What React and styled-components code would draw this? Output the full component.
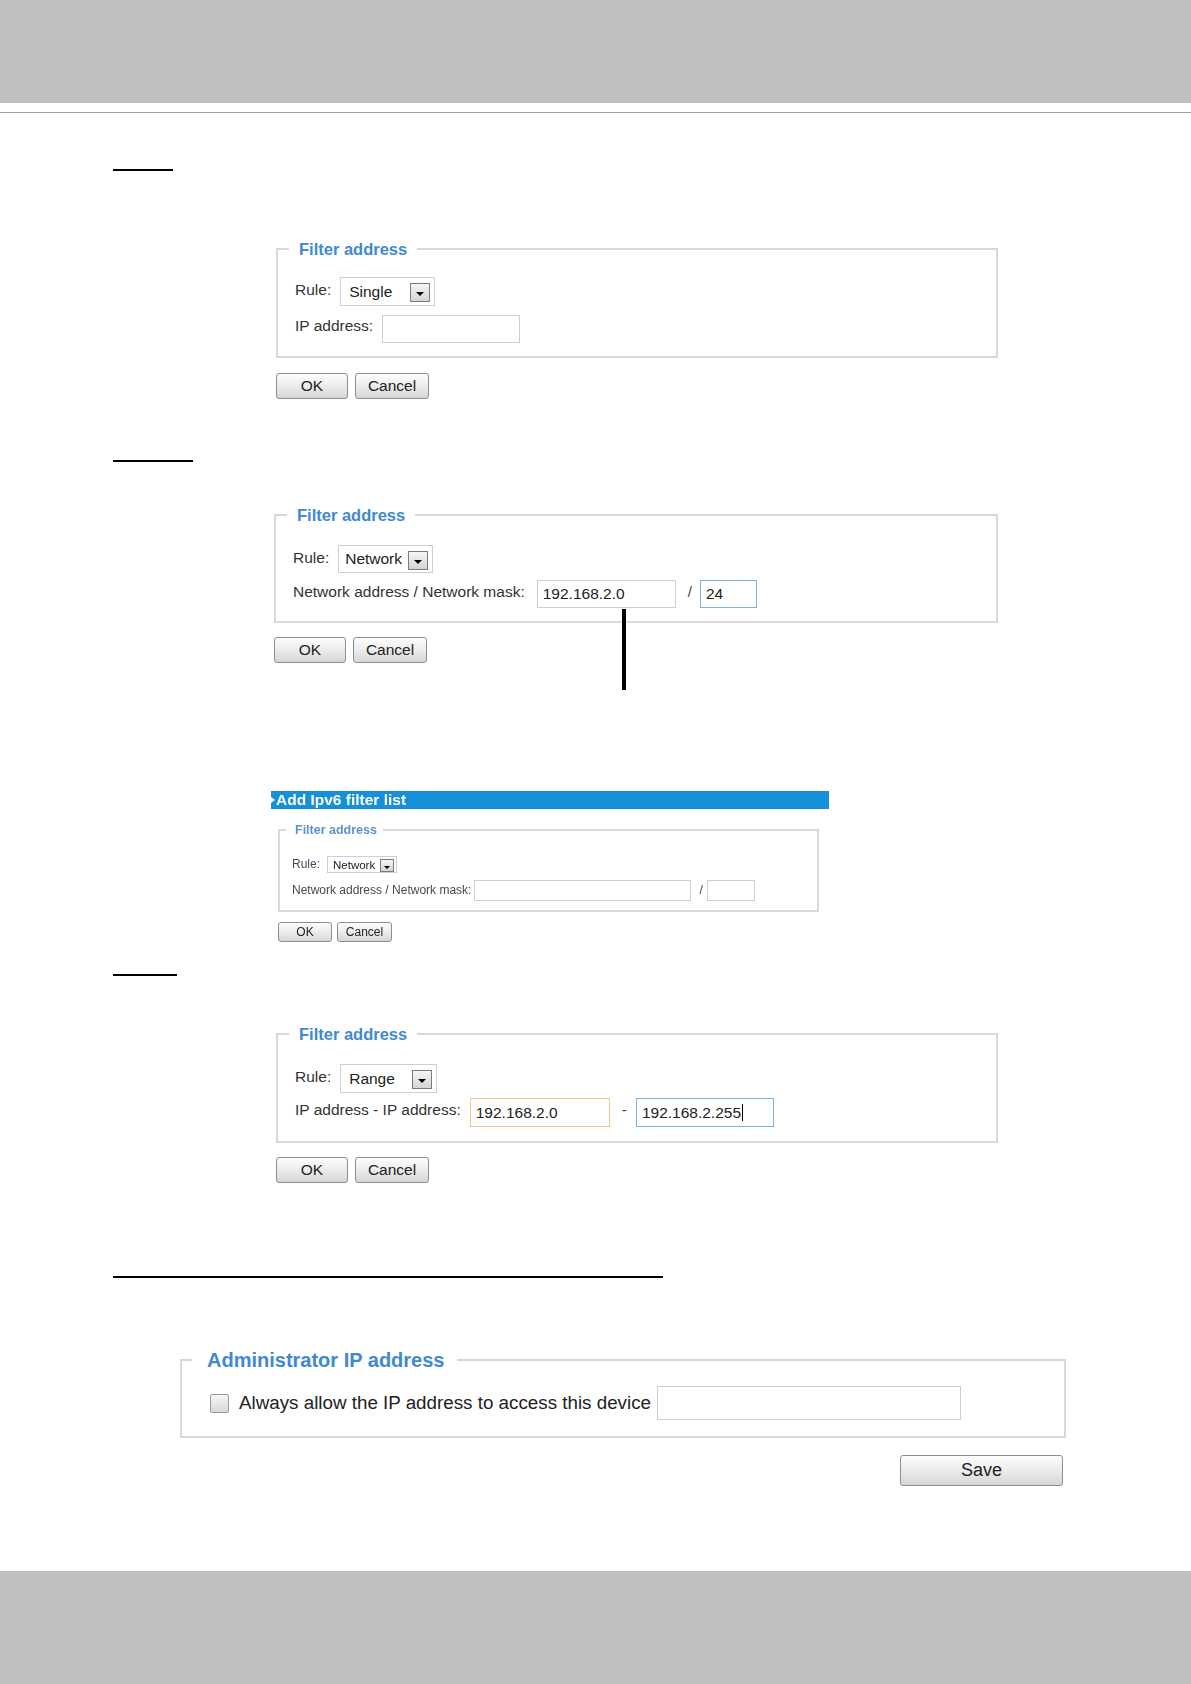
import React from "react";
import styled, { createGlobalStyle } from "styled-components";

const GlobalStyle = createGlobalStyle`
  html, body { margin: 0; padding: 0; background: #ffffff; }
  body { font-family: "Liberation Sans", Arial, sans-serif; color: #333333; }
  * { box-sizing: border-box; }
`;

const Page = styled.div`
  width: 1191px;
  min-height: 1684px;
  display: flex;
  flex-direction: column;
  background: #ffffff;
`;

const TopBand = styled.header`
  flex: none;
  height: 103px;
  background: #c0c0c0;
`;

const TopRule = styled.div`
  flex: none;
  margin-top: 9px;
  height: 1px;
  background: #9d9d9d;
`;

const Content = styled.main`
  display: flex;
  flex-direction: column;
  align-items: flex-start;
  padding-left: 113px;
`;

const BottomBand = styled.footer`
  flex: none;
  margin-top: auto;
  height: 113px;
  background: #c0c0c0;
`;

const HeadingMark = styled.div`
  margin-top: ${(p) => p.$top}px;
  width: ${(p) => p.$w}px;
  height: 2px;
  background: #000000;
`;

const FormBlock = styled.section`
  position: relative;
  display: flex;
  flex-direction: column;
  margin-top: ${(p) => p.$top}px;
  margin-left: ${(p) => p.$left}px;
  width: ${(p) => p.$w}px;
`;

const Box = styled.fieldset`
  margin: 0;
  min-width: 0;
  border: 2px solid #d8d8d8;
  padding: ${(p) => p.$pt}px ${(p) => p.$px}px ${(p) => p.$pb}px;
  display: flex;
  flex-direction: column;
  gap: ${(p) => p.$gap}px;
`;

const Legend = styled.legend`
  margin-left: ${(p) => p.$ml}px;
  padding: 0 ${(p) => p.$pr}px 0 ${(p) => p.$pl}px;
  font-weight: bold;
  font-size: ${(p) => p.$fs}px;
  line-height: ${(p) => p.$lh}px;
  color: ${(p) => p.$color || "#4189d1"};
  white-space: nowrap;
`;

const Row = styled.div`
  display: flex;
  align-items: ${(p) => (p.$center ? "center" : "flex-start")};
`;

const Label = styled.span`
  padding-top: ${(p) => p.$pt || 0}px;
  margin-right: ${(p) => p.$gap}px;
  font-size: ${(p) => p.$fs}px;
  line-height: ${(p) => p.$lh}px;
  color: ${(p) => p.$color || "#333333"};
  white-space: nowrap;
`;

const Sep = styled.span`
  margin: 0 ${(p) => p.$mr}px 0 ${(p) => p.$ml}px;
  padding-top: ${(p) => p.$pt}px;
  font-size: ${(p) => p.$fs}px;
  line-height: 18px;
  color: #444444;
`;

const SelectBox = styled.div`
  width: ${(p) => p.$w}px;
  height: ${(p) => p.$h}px;
  border: 1px solid #cfcfcf;
  background: #ffffff;
  display: flex;
  align-items: center;
  justify-content: space-between;
  padding: 0 ${(p) => p.$pr}px 0 ${(p) => p.$pl}px;
  font-size: ${(p) => p.$fs}px;
  color: #222222;
  white-space: nowrap;
`;

const DropBtn = styled.span`
  flex: none;
  width: ${(p) => p.$s}px;
  height: ${(p) => p.$s - 1}px;
  margin-top: 2px;
  border: 1px solid #7b7b7b;
  background: linear-gradient(#f6f6f6, #d4d4d4);
  display: flex;
  align-items: center;
  justify-content: center;
  padding-top: 3px;
`;

const Field = styled.div`
  width: ${(p) => p.$w}px;
  height: ${(p) => p.$h}px;
  border: 1px solid ${(p) => p.$tone || "#cfcfcf"};
  background: #ffffff;
  display: flex;
  align-items: center;
  padding-left: ${(p) => p.$pl || 5}px;
  font-size: ${(p) => p.$fs}px;
  color: #222222;
  white-space: nowrap;
`;

const Caret = styled.span`
  display: inline-block;
  width: 1px;
  height: 17px;
  margin-left: 1px;
  background: #000000;
`;

const ButtonRow = styled.div`
  display: flex;
  gap: ${(p) => p.$gap}px;
  margin-top: ${(p) => p.$top}px;
  justify-content: ${(p) => (p.$end ? "flex-end" : "flex-start")};
  padding-right: ${(p) => p.$pr || 0}px;
`;

const Btn = styled.button`
  width: ${(p) => p.$w}px;
  height: ${(p) => p.$h}px;
  padding: 0;
  border: 1px solid #8e8e8e;
  border-radius: 3px;
  background: linear-gradient(#fdfdfd 0%, #ececec 50%, #d6d6d6 100%);
  font-family: "Liberation Sans", Arial, sans-serif;
  font-size: ${(p) => p.$fs}px;
  color: #222222;
`;

const Pointer = styled.div`
  position: absolute;
  left: ${(p) => p.$x}px;
  top: ${(p) => p.$y}px;
  width: 4px;
  height: ${(p) => p.$h}px;
  background: #000000;
`;

const Shot = styled.section`
  margin-top: ${(p) => p.$top}px;
  margin-left: 158px;
  width: 558px;
  display: flex;
  flex-direction: column;
  filter: blur(0.35px);
`;

const ShotBar = styled.div`
  height: 18px;
  background: #1690d8;
  display: flex;
  align-items: center;
  gap: 1px;
  color: #ffffff;
  font-weight: bold;
  font-size: 15.5px;
  line-height: 18px;
`;

const ShotMarker = styled.span`
  width: 0;
  height: 0;
  border-top: 3px solid transparent;
  border-bottom: 3px solid transparent;
  border-left: 4px solid #ffffff;
`;

const ShotBody = styled.div`
  margin-top: 14px;
  margin-left: 7px;
  width: 541px;
  display: flex;
  flex-direction: column;
`;

const CheckRow = styled.div`
  display: flex;
  align-items: center;
`;

const CheckBox = styled.span`
  flex: none;
  width: 19px;
  height: 19px;
  margin-right: 10px;
  border: 1px solid #9a9a9a;
  border-radius: 2px;
  background: linear-gradient(#f6f6f6, #d9d9d9);
`;

const CheckText = styled.span`
  font-size: 18.8px;
  color: #222222;
  margin-right: 6px;
  white-space: nowrap;
`;

const Arrow = ({ w = 8, h = 4 }) => (
  <svg width={w} height={h} viewBox="0 0 8 4" aria-hidden="true">
    <polygon points="0,0 8,0 4,4" fill="#000000" />
  </svg>
);

const Select = ({ w, h, fs, pl = 8, pr = 4, s = 20, children }) => (
  <SelectBox $w={w} $h={h} $fs={fs} $pl={pl} $pr={pr}>
    <span>{children}</span>
    <DropBtn $s={s}>
      <Arrow w={s > 15 ? 8 : 6} h={s > 15 ? 4 : 3} />
    </DropBtn>
  </SelectBox>
);

const OkCancel = ({ top }) => (
  <ButtonRow $gap={7} $top={top}>
    <Btn $w={72} $h={26} $fs={15.5}>OK</Btn>
    <Btn $w={74} $h={26} $fs={15.5}>Cancel</Btn>
  </ButtonRow>
);

const FilterLegend = () => (
  <Legend $ml={-6} $pl={10} $pr={10} $fs={16.5} $lh={20}>
    Filter address
  </Legend>
);

export default function App() {
  return (
    <>
      <GlobalStyle />
      <Page>
        <TopBand />
        <TopRule />
        <Content>
          {/* Single */}
          <HeadingMark $top={56} $w={60} />
          <FormBlock $top={68} $left={163} $w={722}>
            <Box $pt={18} $pb={13} $px={17} $gap={9}>
              <FilterLegend />
              <Row>
                <Label $fs={15.5} $lh={18} $pt={4} $gap={9}>Rule:</Label>
                <Select w={95} h={29} fs={15.5}>Single</Select>
              </Row>
              <Row>
                <Label $fs={15.5} $lh={18} $pt={2} $gap={9}>IP address:</Label>
                <Field $w={138} $h={28} $fs={15.5} />
              </Row>
            </Box>
            <OkCancel top={15} />
          </FormBlock>

          {/* Network */}
          <HeadingMark $top={61} $w={80} />
          <FormBlock $top={43} $left={161} $w={724}>
            <Box $pt={20} $pb={13} $px={17} $gap={7}>
              <FilterLegend />
              <Row>
                <Label $fs={15.5} $lh={18} $pt={4} $gap={9}>Rule:</Label>
                <Select w={95} h={28} fs={15.5} pl={6}>Network</Select>
              </Row>
              <Row>
                <Label $fs={15.5} $lh={18} $pt={3} $gap={12}>Network address / Network mask:</Label>
                <Field $w={139} $h={28} $fs={15.5}>192.168.2.0</Field>
                <Sep $fs={15} $ml={12} $mr={8} $pt={3}>/</Sep>
                <Field $w={57} $h={28} $fs={15.5} $tone="#7fb3dc">24</Field>
              </Row>
            </Box>
            <OkCancel top={14} />
            <Pointer $x={348} $y={104} $h={81} />
          </FormBlock>

          {/* IPv6 screenshot */}
          <Shot $top={128}>
            <ShotBar>
              <ShotMarker />
              Add Ipv6 filter list
            </ShotBar>
            <ShotBody>
              <Box $pt={19} $pb={9} $px={12} $gap={7}>
                <Legend $ml={-6} $pl={9} $pr={6} $fs={12.5} $lh={14} $color="#5d92cf">
                  Filter address
                </Legend>
                <Row>
                  <Label $fs={12} $lh={14} $pt={1} $gap={7} $color="#4a4a4a">Rule:</Label>
                  <Select w={70} h={17} fs={11.5} pl={5} pr={2} s={14}>Network</Select>
                </Row>
                <Row>
                  <Label $fs={12} $lh={14} $pt={3} $gap={3} $color="#4a4a4a">Network address / Network mask:</Label>
                  <Field $w={217} $h={21} $fs={12} />
                  <Sep $fs={12} $ml={8} $mr={4} $pt={1}>/</Sep>
                  <Field $w={48} $h={21} $fs={12} />
                </Row>
              </Box>
              <ButtonRow $gap={5} $top={10}>
                <Btn $w={54} $h={20} $fs={12}>OK</Btn>
                <Btn $w={55} $h={20} $fs={12}>Cancel</Btn>
              </ButtonRow>
            </ShotBody>
          </Shot>

          {/* Range */}
          <HeadingMark $top={32} $w={64} />
          <FormBlock $top={48} $left={163} $w={722}>
            <Box $pt={20} $pb={14} $px={17} $gap={5}>
              <FilterLegend />
              <Row>
                <Label $fs={15.5} $lh={18} $pt={4} $gap={9}>Rule:</Label>
                <Select w={97} h={29} fs={15.5}>Range</Select>
              </Row>
              <Row>
                <Label $fs={15.5} $lh={18} $pt={3} $gap={9}>IP address - IP address:</Label>
                <Field $w={140} $h={29} $fs={15.5} $tone="#f3c18e">192.168.2.0</Field>
                <Sep $fs={15.5} $ml={12} $mr={9} $pt={3}>-</Sep>
                <Field $w={138} $h={29} $fs={15.5} $tone="#7fb3dc">
                  192.168.2.255
                  <Caret />
                </Field>
              </Row>
            </Box>
            <OkCancel top={14} />
          </FormBlock>

          {/* Administrator IP address */}
          <HeadingMark $top={93} $w={550} />
          <FormBlock $top={70} $left={67} $w={886}>
            <Box $pt={14} $pb={16} $px={28} $gap={0}>
              <Legend $ml={-18} $pl={15} $pr={13} $fs={20} $lh={24}>
                Administrator IP address
              </Legend>
              <CheckRow>
                <CheckBox />
                <CheckText>Always allow the IP address to access this device</CheckText>
                <Field $w={304} $h={34} $fs={17} />
              </CheckRow>
            </Box>
            <ButtonRow $gap={0} $top={17} $end $pr={3}>
              <Btn $w={163} $h={31} $fs={18}>Save</Btn>
            </ButtonRow>
          </FormBlock>
        </Content>
        <BottomBand />
      </Page>
    </>
  );
}
